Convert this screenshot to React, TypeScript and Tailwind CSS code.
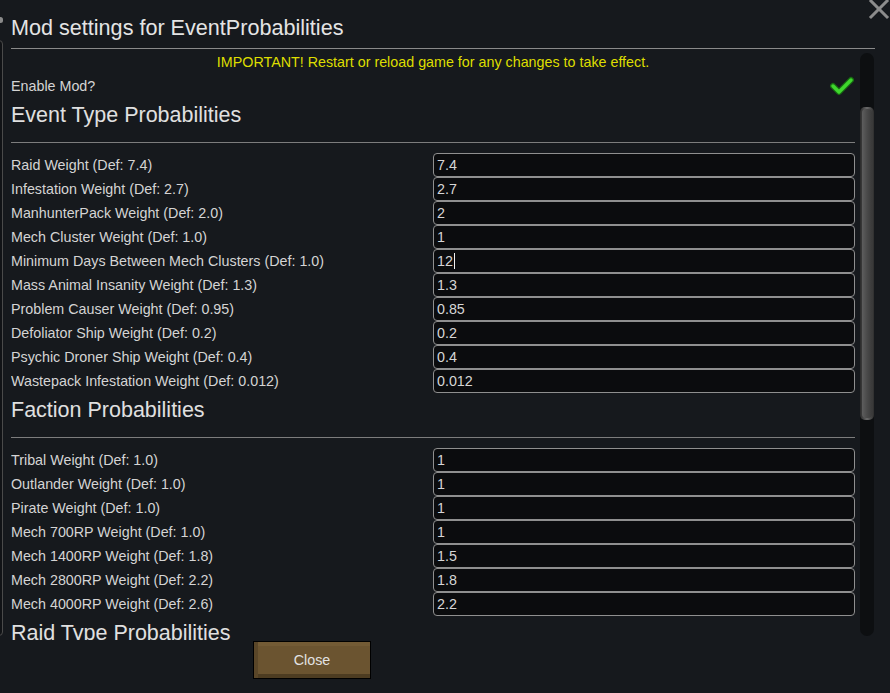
import React from "react";

const eventRows: [string, string][] = [
  ["Raid Weight (Def: 7.4)", "7.4"],
  ["Infestation Weight (Def: 2.7)", "2.7"],
  ["ManhunterPack Weight (Def: 2.0)", "2"],
  ["Mech Cluster Weight (Def: 1.0)", "1"],
  ["Minimum Days Between Mech Clusters (Def: 1.0)", "12"],
  ["Mass Animal Insanity Weight (Def: 1.3)", "1.3"],
  ["Problem Causer Weight (Def: 0.95)", "0.85"],
  ["Defoliator Ship Weight (Def: 0.2)", "0.2"],
  ["Psychic Droner Ship Weight (Def: 0.4)", "0.4"],
  ["Wastepack Infestation Weight (Def: 0.012)", "0.012"],
];

const factionRows: [string, string][] = [
  ["Tribal Weight (Def: 1.0)", "1"],
  ["Outlander Weight (Def: 1.0)", "1"],
  ["Pirate Weight (Def: 1.0)", "1"],
  ["Mech 700RP Weight (Def: 1.0)", "1"],
  ["Mech 1400RP Weight (Def: 1.8)", "1.5"],
  ["Mech 2800RP Weight (Def: 2.2)", "1.8"],
  ["Mech 4000RP Weight (Def: 2.6)", "2.2"],
];

function Row({ label, value, caret }: { label: string; value: string; caret?: boolean }) {
  return (
    <div className="flex h-[24px] items-center">
      <div className="w-[422px] text-[14.3px] leading-none text-[#d4d4d4]">{label}</div>
      <div className="flex h-[24px] w-[422px] items-center rounded-[4px] border border-[#8f8f8f] bg-[#0b0c0e] pl-[3px] text-[14.3px] leading-none text-[#d6d6d6]">
        <span>{value}</span>
        {caret && <span className="ml-[1px] inline-block h-[16px] w-[1px] bg-[#f0f0f0]" />}
      </div>
    </div>
  );
}

function Section({ title, rows }: { title: string; rows: [string, string][] }) {
  return (
    <div className="flex flex-col">
      <div className="flex h-[32px] items-center whitespace-nowrap pt-[4px] text-[21.5px] leading-none text-[#e0e0e0]">{title}</div>
      <div className="mb-[10px] mt-[12px] h-px bg-[#7d7d7d]" />
      {rows.map(([l, v], i) => (
        <Row key={i} label={l} value={v} caret={v === "12"} />
      ))}
    </div>
  );
}

export default function App() {
  return (
    <div
      className="relative h-[693px] w-[890px] overflow-hidden bg-[#16191d]"
      style={{ fontFamily: '"Liberation Sans", Arial, sans-serif' }}
    >
      {/* background window remnants */}
      <div className="absolute left-[-2px] top-[17px] h-[6px] w-[5px] rounded-full bg-[#8a8a8a]" />
      <div className="absolute left-[-10px] top-[40px] h-[596px] w-[13px] rounded-[4px] border border-[#4a4a4a] bg-[#111316]" />

      {/* close X */}
      <svg className="absolute right-0 top-0" width="22" height="20" viewBox="0 0 22 20">
        <path d="M3 1 L19 17 M19 1 L3 17" stroke="#8c8c8c" strokeWidth="3" strokeLinecap="square" />
      </svg>

      <div className="flex flex-col pl-[11px]">
        <div className="flex h-[49px] w-[864px] items-center border-b border-[#8a8a8a] pt-[8px] text-[21.6px] leading-none text-[#e4e4e4]">
          Mod settings for EventProbabilities
        </div>

        <div className="flex">
          <div className="flex w-[844px] flex-col">
            <div className="flex h-[25px] items-center justify-center pt-[1px] text-[14.3px] leading-none text-[#dede00]">
              IMPORTANT! Restart or reload game for any changes to take effect.
            </div>
            <div className="h-[566px] overflow-hidden">
              <div className="flex h-[24px] items-center justify-between">
                <span className="text-[14.3px] leading-none text-[#d4d4d4]">Enable Mod?</span>
                <svg width="24" height="22" viewBox="0 0 24 22" className="mr-[1px] mt-[2px]">
                  <path d="M3 10 L9 16 L21 4" fill="none" stroke="#176a12" strokeWidth="6" strokeLinecap="round" strokeLinejoin="round" />
                  <path d="M3 10 L9 16 L21 4" fill="none" stroke="#3fd62d" strokeWidth="3.5" strokeLinecap="round" strokeLinejoin="round" />
                </svg>
              </div>
              <Section title="Event Type Probabilities" rows={eventRows} />
              <Section title="Faction Probabilities" rows={factionRows} />
              <Section title="Raid Type Probabilities" rows={[]} />
            </div>
          </div>
          <div className="ml-[5px] mt-[4px] flex h-[583px] w-[14px] flex-col rounded-full bg-[#0d0f11]">
            <div className="mt-[54px] h-[313px] w-[14px] rounded-[5px] bg-gradient-to-r from-[#2a2a2a] via-[#6a6a6a] to-[#2e2e2e] p-[2px]">
              <div className="h-full w-full rounded-[4px] bg-gradient-to-r from-[#5e5e5e] via-[#4a4a4a] to-[#3a3a3a]" />
            </div>
          </div>
        </div>

        <div className="ml-[242px] mt-[1px]">
          <button className="flex h-[38px] w-[118px] items-center justify-center border border-black bg-[#6b5430] text-[14.3px] leading-none text-[#e2e2e2] shadow-[inset_4px_0_0_#5a4628,inset_0_-4px_0_#4d3c21,inset_0_4px_0_#735b35]">
            Close
          </button>
        </div>
      </div>
    </div>
  );
}
